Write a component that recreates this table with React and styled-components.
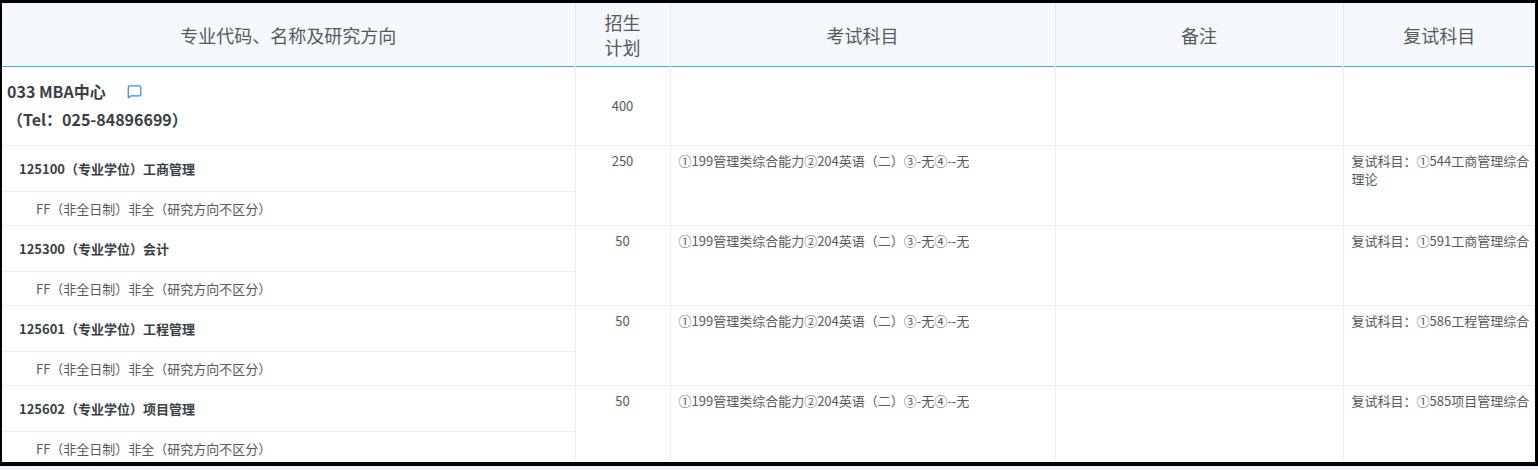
import React from 'react';
import styled, { createGlobalStyle } from 'styled-components';
import { MessageSquare } from 'lucide-react';

const GlobalStyle = createGlobalStyle`
  html, body {
    margin: 0;
    padding: 0;
    background: #eef1f6;
    font-family: "Noto Sans CJK SC", "Noto Sans", sans-serif;
  }
`;

const MAJORS = [
  { code: '125100（专业学位）工商管理', plan: 250, retest: '复试科目：①544工商管理综合理论' },
  { code: '125300（专业学位）会计', plan: 50, retest: '复试科目：①591工商管理综合' },
  { code: '125601（专业学位）工程管理', plan: 50, retest: '复试科目：①586工程管理综合' },
  { code: '125602（专业学位）项目管理', plan: 50, retest: '复试科目：①585项目管理综合' },
];

const EXAM = '①199管理类综合能力②204英语（二）③-无④--无';
const DIRECTION = 'FF（非全日制）非全（研究方向不区分）';

const Frame = styled.div`
  width: 1533px;
  height: 459px;
  border-style: solid;
  border-color: #000;
  border-width: 3px 3px 4px 2px;
  background: #fff;
  overflow: hidden;
`;

const Table = styled.table`
  width: 1533px;
  border-collapse: collapse;
  table-layout: fixed;
  color: #606266;
`;

const Th = styled.th`
  height: 64px;
  padding: 0 6px;
  background: #f5f8fc;
  border-right: 1px solid #e4e9f0;
  box-shadow: inset 0 -1px 0 #48b2cd;
  font-size: 18px;
  font-weight: normal;
  line-height: 25px;
  color: #555a61;
  text-align: center;

  &:last-child { border-right: none; }
`;

const Td = styled.td`
  padding: ${(p) => (p.$top ? '6px 8px 0' : '0 8px')};
  border-right: 1px solid #ebeef5;
  border-bottom: 1px solid #ebeef5;
  vertical-align: ${(p) => (p.$top ? 'top' : 'middle')};
  text-align: ${(p) => (p.$center ? 'center' : 'left')};
  font-size: 13px;
  line-height: 18px;
  color: #555a61;

  &:last-child {
    border-right: none;
    padding-right: 0;
  }
`;

const DeptCell = styled.td`
  padding: 10px 5px;
  border-right: 1px solid #ebeef5;
  border-bottom: 1px solid #ebeef5;
  vertical-align: top;
  font-size: 16px;
  font-weight: bold;
  line-height: 28px;
  color: #3a3f47;
`;

const DeptName = styled.div`
  display: flex;
  align-items: center;
  gap: 21px;
  color: #3a3f47;

  svg { color: #3a8ee6; }
`;

const MajorCell = styled.td`
  height: 45px;
  padding: 0 0 0 17px;
  border-right: 1px solid #ebeef5;
  border-bottom: 1px solid #ebeef5;
  font-size: 13px;
  font-weight: bold;
  color: #3a3f47;
`;

const DirectionCell = styled.td`
  height: 33px;
  padding: 0 0 0 34px;
  border-right: 1px solid #ebeef5;
  border-bottom: 1px solid #ebeef5;
  font-size: 13px;
  color: #555a61;
`;

const DeptRow = styled.tr`
  height: 78px;
`;

export default function App() {
  return (
    <>
      <GlobalStyle />
      <Frame>
        <Table>
          <colgroup>
            <col style={{ width: 573 }} />
            <col style={{ width: 95 }} />
            <col style={{ width: 385 }} />
            <col style={{ width: 288 }} />
            <col style={{ width: 192 }} />
          </colgroup>
          <thead>
            <tr>
              <Th>专业代码、名称及研究方向</Th>
              <Th>招生<br />计划</Th>
              <Th>考试科目</Th>
              <Th>备注</Th>
              <Th>复试科目</Th>
            </tr>
          </thead>
          <tbody>
            <DeptRow>
              <DeptCell>
                <DeptName>
                  033 MBA中心
                  <MessageSquare size={15} strokeWidth={2} />
                </DeptName>
                <div>（Tel：025-84896699）</div>
              </DeptCell>
              <Td $center>400</Td>
              <Td />
              <Td />
              <Td />
            </DeptRow>
            {MAJORS.map((m) => (
              <React.Fragment key={m.code}>
                <tr>
                  <MajorCell>{m.code}</MajorCell>
                  <Td $top $center rowSpan={2}>{m.plan}</Td>
                  <Td $top rowSpan={2}>{EXAM}</Td>
                  <Td $top rowSpan={2} />
                  <Td $top rowSpan={2}>{m.retest}</Td>
                </tr>
                <tr>
                  <DirectionCell>{DIRECTION}</DirectionCell>
                </tr>
              </React.Fragment>
            ))}
          </tbody>
        </Table>
      </Frame>
    </>
  );
}
